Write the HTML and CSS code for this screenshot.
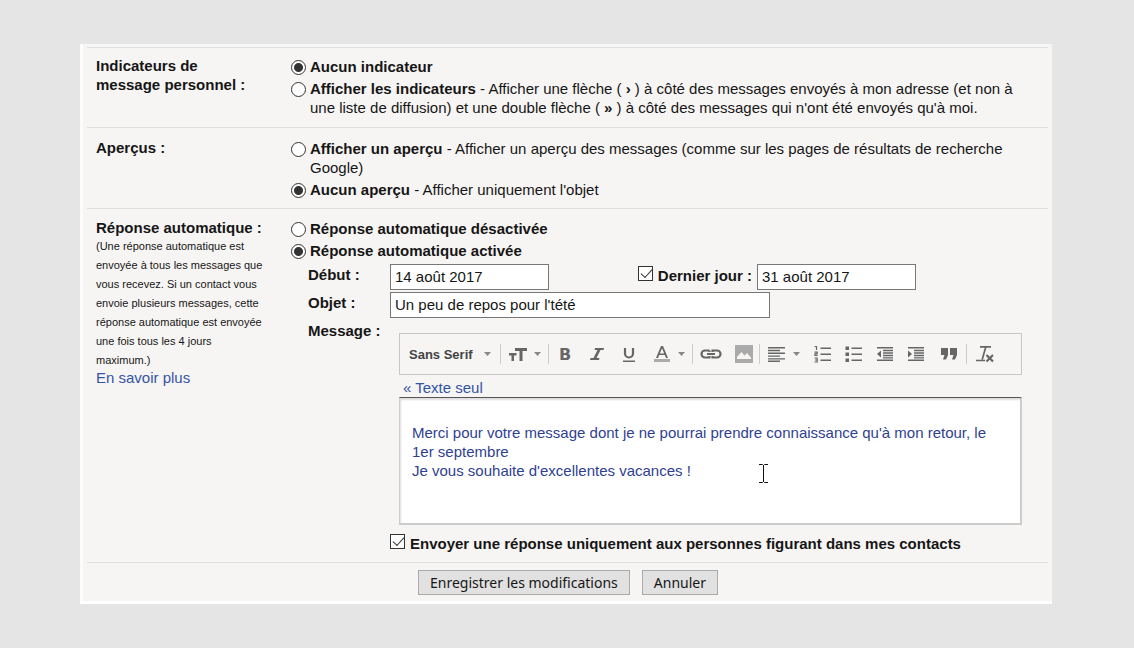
FILE: index.html
```html
<!DOCTYPE html>
<html lang="fr">
<head>
<meta charset="utf-8">
<title>Paramètres</title>
<link rel="stylesheet" href="styles.css">
</head>
<body>
<form class="panel">
  <section class="row">
    <h2 class="heading">Indicateurs de<br>message personnel :</h2>
    <div class="options">
      <label class="option"><input type="radio" name="indicateur" checked><span><b>Aucun indicateur</b></span></label>
      <label class="option"><input type="radio" name="indicateur"><span><b>Afficher les indicateurs</b> - Afficher une flèche ( <b>›</b> ) à côté des messages envoyés à mon adresse (et non à<br>une liste de diffusion) et une double flèche ( <b>»</b> ) à côté des messages qui n'ont été envoyés qu'à moi.</span></label>
    </div>
  </section>

  <section class="row">
    <h2 class="heading">Aperçus :</h2>
    <div class="options">
      <label class="option"><input type="radio" name="apercu"><span><b>Afficher un aperçu</b> - Afficher un aperçu des messages (comme sur les pages de résultats de recherche<br>Google)</span></label>
      <label class="option"><input type="radio" name="apercu" checked><span><b>Aucun aperçu</b> - Afficher uniquement l'objet</span></label>
    </div>
  </section>

  <section class="row">
    <div>
      <h2 class="heading">Réponse automatique :</h2>
      <p class="help">(Une réponse automatique est<br>envoyée à tous les messages que<br>vous recevez. Si un contact vous<br>envoie plusieurs messages, cette<br>réponse automatique est envoyée<br>une fois tous les 4 jours<br>maximum.)</p>
      <a class="link more" href="#">En savoir plus</a>
    </div>
    <div class="options">
      <label class="option"><input type="radio" name="reponse"><span><b>Réponse automatique désactivée</b></span></label>
      <label class="option"><input type="radio" name="reponse" checked><span><b>Réponse automatique activée</b></span></label>

      <div class="fields">
        <label class="name" for="debut">Début :</label>
        <div class="dates">
          <input class="text date" id="debut" type="text" value="14 août 2017">
          <div class="last-day">
            <input type="checkbox" id="fin-active" checked>
            <label for="fin-active">Dernier jour :</label>
            <input class="text date" type="text" aria-label="Dernier jour" value="31 août 2017">
          </div>
        </div>

        <label class="name" for="objet">Objet :</label>
        <input class="text subject" id="objet" type="text" value="Un peu de repos pour l'tété">

        <label class="name" for="message">Message :</label>
        <div class="editor">
          <div class="toolbar">
            <span class="font"><select aria-label="Police"><option>Sans Serif</option></select><svg class="arrow" viewBox="0 0 7 4"><path d="M0 0h7L3.500 4z"/></svg></span>
            <i class="sep"></i>
            <button type="button" class="tool menu" aria-label="Taille"><svg class="icon" viewBox="0 0 18 18"><path d="M6 3h12v3h-4.500v10h-3V6H6zM0 8h7.500v2.500H5V16H2.500v-5.500H0z"/></svg><svg class="arrow" viewBox="0 0 7 4"><path d="M0 0h7L3.500 4z"/></svg></button>
            <i class="sep"></i>
            <button type="button" class="tool letter bold">B</button>
            <button type="button" class="tool letter" aria-label="Italique"><svg class="icon" viewBox="0 0 18 18"><path d="M7 3h9l-.5 2h-3l-4 8h3l-.5 2H2l.5-2h3l4-8h-3z"/></svg></button>
            <button type="button" class="tool letter" aria-label="Souligner"><svg class="icon" viewBox="0 0 18 18"><path d="M5 3v5.500a4 4 0 0 0 8 0V3" fill="none" stroke="#666" stroke-width="2.200"/><path d="M3 15.500h12V17H3z"/></svg></button>
            <button type="button" class="tool menu" aria-label="Couleur du texte"><svg class="icon" viewBox="0 0 18 18"><path d="M8 1h2l5 12h-2l-1.200-3H6.200l-1.200 3H3zm1 2.200L6.800 8.400h4.400z"/><path d="M1 14h16v3H1z" fill="#aaa"/></svg><svg class="arrow" viewBox="0 0 7 4"><path d="M0 0h7L3.500 4z"/></svg></button>
            <i class="sep"></i>
            <button type="button" class="tool wide" aria-label="Lien"><svg class="icon link-icon" viewBox="0 0 22 18"><path d="M9.500 5.500H5a3.500 3.500 0 0 0 0 7h4.500V11M9.500 5.500V7M12.500 7V5.500H17a3.500 3.500 0 0 1 0 7h-4.500V11M7 9h8" fill="none" stroke="#666" stroke-width="2.200"/></svg></button>
            <button type="button" class="tool" aria-label="Image"><svg class="icon" viewBox="0 0 18 18"><path d="M0 0h18v18H0z" fill="#aaa"/><path d="M2 14v-2l4.500-5 3 3.500L12 8l4 4.500V14z" fill="#f6f5f4"/></svg></button>
            <i class="sep"></i>
            <button type="button" class="tool menu" aria-label="Aligner"><svg class="icon" viewBox="0 0 18 18"><path d="M0 2h17v1.400H0zM0 4.800h12v1.400H0zM0 7.600h17V9H0zM0 10.400h12v1.400H0zM0 13.200h17v1.400H0zM0 15.600h12V17H0z"/></svg><svg class="arrow" viewBox="0 0 7 4"><path d="M0 0h7L3.500 4z"/></svg></button>
            <button type="button" class="tool" aria-label="Liste numérotée"><svg class="icon" viewBox="0 0 18 18"><path d="M6.500 2.500H17V4H6.500zM6.500 8.500H17V10H6.500zM6.500 14.500H17V16H6.500z"/><path d="M.5 1.500h2V5M.5 7.200h2.700v1.600H1v1.700h2.700M.5 13h2.700v4H.5M1 15h2" fill="none" stroke="#666" stroke-width="1.200"/></svg></button>
            <button type="button" class="tool" aria-label="Liste à puces"><svg class="icon" viewBox="0 0 18 18"><path d="M6.500 2.500H17V4H6.500zM6.500 8.500H17V10H6.500zM6.500 14.500H17V16H6.500zM.5 1.500H4V5H.5zM.5 7.500H4V11H.5zM.5 13.500H4V17H.5z"/></svg></button>
            <button type="button" class="tool" aria-label="Diminuer le retrait"><svg class="icon" viewBox="0 0 18 18"><path d="M1 2h16v1.500H1zM7 4.800h10v1.500H7zM7 7.300h10v1.500H7zM7 9.800h10v1.500H7zM7 12.300h10v1.200H7zM1 14.500h16V16H1zM1 9l4-3.500v7z"/></svg></button>
            <button type="button" class="tool" aria-label="Augmenter le retrait"><svg class="icon" viewBox="0 0 18 18"><path d="M1 2h16v1.500H1zM7 4.800h10v1.500H7zM7 7.300h10v1.500H7zM7 9.800h10v1.500H7zM7 12.300h10v1.200H7zM1 14.500h16V16H1zM5 9L1 5.500v7z"/></svg></button>
            <button type="button" class="tool wide" aria-label="Citation"><svg class="icon" viewBox="0 0 18 18"><path d="M1 3h7v7l-2 4.500H3L4.500 10H1zM10 3h7v7l-2 4.500h-3l1.500-4.500H10z"/></svg></button>
            <i class="sep"></i>
            <button type="button" class="tool wide" aria-label="Supprimer la mise en forme"><svg class="icon" viewBox="0 0 18 18"><path d="M4 1.800h11M9.800 2L6.200 14.500M0 15.500h9" fill="none" stroke="#666" stroke-width="1.700"/><path d="M10.500 10l6.500 6.500M17 10l-6.500 6.500" fill="none" stroke="#666" stroke-width="2.200"/></svg></button>
          </div>
          <a class="link plain" href="#">« Texte seul</a>
          <div class="message-box">
            <textarea id="message" rows="4">Merci pour votre message dont je ne pourrai prendre connaissance qu'à mon retour, le
1er septembre
Je vous souhaite d'excellentes vacances !</textarea>
            <svg class="cursor" viewBox="0 0 9 19"><path d="M0 .5h3.500l1 1 1-1H9M4.500 1v17M0 18.500h3.500l1-1 1 1H9" fill="none" stroke="#111"/></svg>
          </div>
        </div>

        <label class="contacts"><input type="checkbox" checked><b>Envoyer une réponse uniquement aux personnes figurant dans mes contacts</b></label>
      </div>
    </div>
  </section>

  <footer class="actions">
    <button type="submit" class="button">Enregistrer les modifications</button>
    <button type="button" class="button">Annuler</button>
  </footer>
</form>
</body>
</html>
```
FILE: styles.css
```css
* { box-sizing: border-box; }

body {
  margin: 0;
  padding: 44px 82px 44px 80px;
  background: #e5e5e5;
  color: #161616;
  font: 15px/19px "Liberation Sans", Arial, sans-serif;
}

input, select, textarea, button { margin: 0; color: inherit; font: inherit; }

.panel {
  padding: 3px 4px 0 7px;
  border-bottom: 3px solid #fff;
  background: #f6f5f4;
  box-shadow: inset 3px 0 #fcfcfc;
}

.row {
  display: grid;
  grid-template-columns: 194px 1fr;
  padding: 8px 0 10px 9px;
  border-top: 1px solid #e0e0e2;
}

.row:nth-child(2) { padding-top: 10px; padding-bottom: 9px; }
.row:nth-child(3) { padding-top: 9px; padding-bottom: 9px; }

.heading { margin: 0; font-size: 15px; font-weight: bold; }

.help { margin: 0; font-size: 11px; line-height: 19px; }

.link { color: #3454a4; text-decoration: none; }
.more { display: block; line-height: 16px; }

.options { display: flex; flex-direction: column; gap: 3px; padding-top: 1px; }

.option { display: flex; align-items: flex-start; gap: 4px; white-space: nowrap; }

input[type="radio"],
input[type="checkbox"] {
  flex: none;
  width: 15px;
  height: 15px;
  appearance: none;
  border: 1px solid #333;
  background: #fff;
}

input[type="radio"] { margin: 3px 0 0 1px; border-radius: 50%; }
input[type="radio"]:checked { background: radial-gradient(circle, #333 4px, #fff 5px); }

input[type="checkbox"]:checked::after {
  content: "";
  display: block;
  width: 10px;
  height: 5px;
  margin: 2px 0 0 2px;
  border: solid #333;
  border-width: 0 0 1px 1px;
  transform: rotate(-48deg);
}

.fields {
  display: grid;
  grid-template-columns: 82px 1fr;
  row-gap: 2px;
  padding: 1px 26px 0 18px;
}

.name { padding-top: 1px; font-weight: bold; }

.text {
  height: 26px;
  padding: 0 4px 2px;
  border: 1px solid #777;
  background: #fff;
}

.date { width: 159px; }
.subject { width: 380px; }

.dates { display: flex; justify-content: space-between; padding-right: 106px; }
.last-day { display: flex; gap: 5px; font-weight: bold; }
.last-day input[type="checkbox"] { margin-top: 2px; }
.last-day label { padding-top: 2px; }
.last-day .text { font-weight: normal; }

.editor { padding: 13px 0 0 9px; }

.toolbar {
  display: flex;
  align-items: center;
  height: 42px;
  border: 1px solid #c6c8c8;
}

.font { display: flex; align-items: center; width: 100px; padding-left: 9px; }
.font select {
  width: 75px;
  padding: 0;
  appearance: none;
  border: 0;
  background: none;
  color: #444;
  font-size: 13px;
  font-weight: bold;
}

.sep { width: 1px; height: 20px; background: #ccc; }

.tool {
  display: flex;
  align-items: center;
  justify-content: center;
  width: 31px;
  height: 30px;
  padding: 0;
  border: 0;
  background: none;
  color: #666;
}
.tool.wide { width: 35px; }
.tool.menu { gap: 7px; width: 47px; }
.tool.letter { width: 32px; }
.bold { font-family: "DejaVu Sans", sans-serif; font-size: 16px; font-weight: bold; }

.icon { width: 18px; height: 18px; fill: #666; }
.link-icon { width: 22px; }
.arrow { width: 7px; height: 4px; fill: #888; }

.plain { display: block; padding: 3px 0 0 4px; }

.message-box { position: relative; }

textarea {
  display: block;
  width: 100%;
  height: 128px;
  padding: 25px 12px 0;
  border: solid #ccc;
  border-top-color: #555;
  border-width: 1px 2px 2px 1px;
  background: #fff;
  box-shadow: inset 1px 2px 2px #ddd;
  line-height: 19px;
  resize: none;
}

.message-box textarea { color: #2f3f93; }

.cursor { position: absolute; top: 67px; left: 360px; width: 9px; height: 19px; }

.contacts { grid-column: 2; display: flex; gap: 5px; padding-top: 7px; white-space: nowrap; }

.actions {
  display: flex;
  gap: 12px;
  padding: 7px 0 6px 331px;
  border-top: 1px solid #e0e0e2;
}

.button {
  height: 25px;
  padding: 0 11px;
  border: 1px solid #aaa;
  background: #e1e1e1;
  font-family: "Noto Sans", sans-serif;
  font-size: 14px;
}
```
